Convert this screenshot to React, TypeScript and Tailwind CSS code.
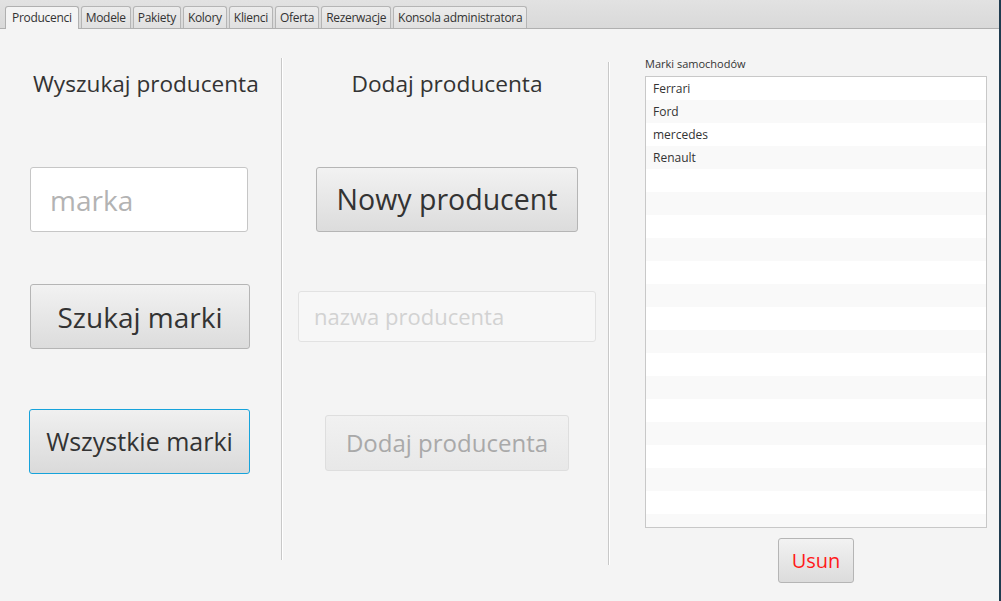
import React from 'react';

const tabs = ['Producenci', 'Modele', 'Pakiety', 'Kolory', 'Klienci', 'Oferta', 'Rezerwacje', 'Konsola administratora'];
const brands = ['Ferrari', 'Ford', 'mercedes', 'Renault'];
const rows = Array.from({ length: 20 }, (_, i) => brands[i] ?? '');

const btn =
  'rounded-[3px] border border-[#b5b5b5] bg-gradient-to-b from-[#f2f2f2] to-[#dcdcdc] text-[#333] flex items-center justify-center';

const App: React.FC = () => {
  return (
    <div
      className="w-[1001px] h-[601px] bg-[#f4f4f4] flex flex-col overflow-hidden relative"
      style={{ fontFamily: '"Open Sans", "Noto Sans", sans-serif' }}
    >
      {/* tab header */}
      <div className="h-[29px] shrink-0 bg-gradient-to-b from-[#e2e2e2] to-[#d9d9d9] border-b border-[#b0b0b0] flex items-end pl-[5px] gap-[2px]">
        {tabs.map((t, i) => (
          <div
            key={t}
            className={
              i === 0
                ? 'h-[23px] -mb-px px-[6px] flex items-center text-[12px] tracking-[-0.3px] text-[#333] bg-[#f4f4f4] border border-b-0 border-[#b0b0b0] rounded-t-[3px]'
                : 'h-[22px] px-[4px] flex items-center text-[12px] tracking-[-0.3px] text-[#333] bg-gradient-to-b from-[#ececec] to-[#e0e0e0] border border-b-0 border-[#b5b5b5] rounded-t-[3px]'
            }
          >
            {t}
          </div>
        ))}
      </div>

      <div className="flex flex-1">
        {/* search column */}
        <div className="w-[281px] shrink-0 flex flex-col">
          <div className="mt-[40px] h-[30px] pl-[33px] text-[22.6px] leading-[30px] text-[#333]">
            Wyszukaj producenta
          </div>
          <div className="mt-[68px] ml-[30px] w-[218px] h-[65px] rounded-[3px] border border-[#c6c6c6] bg-white flex items-center pl-[19px] text-[28px] text-[#b3b3b3]">
            marka
          </div>
          <div className={`${btn} mt-[52px] ml-[30px] w-[220px] h-[65px] text-[28px]`}>Szukaj marki</div>
          <div className="mt-[60px] ml-[29px] w-[221px] h-[65px] rounded-[3px] border border-[#16a3db] bg-gradient-to-b from-[#f0f0f0] to-[#dadada] text-[#333] flex items-center justify-center text-[25px]">
            Wszystkie marki
          </div>
        </div>

        {/* separator */}
        <div className="mt-[29px] h-[502px] w-[2px] shrink-0 border-l border-[#c8c8c8] bg-white" />

        {/* add column */}
        <div className="w-[325px] shrink-0 flex flex-col items-center pl-[3px]">
          <div className="mt-[40px] h-[30px] text-[22.7px] leading-[30px] text-[#333]">
            Dodaj producenta
          </div>
          <div className={`${btn} mt-[68px] w-[262px] h-[65px] text-[28.5px]`}>Nowy producent</div>
          <div className="mt-[59px] w-[298px] h-[51px] rounded-[3px] border border-[#e2e2e2] bg-[#f7f7f7] flex items-center pl-[15px] text-[22px] text-[#d2d2d2]">
            nazwa producenta
          </div>
          <div className="mt-[73px] w-[244px] h-[56px] rounded-[3px] border border-[#dedede] bg-gradient-to-b from-[#f1f1f1] to-[#e8e8e8] text-[#a9a9a9] flex items-center justify-center text-[24px]">
            Dodaj producenta
          </div>
        </div>

        {/* separator */}
        <div className="mt-[33px] h-[503px] w-[2px] shrink-0 border-l border-[#c8c8c8] bg-white" />

        {/* list column */}
        <div className="flex-1 flex flex-col pl-[35px] pr-[14px]">
          <div className="mt-[27px] text-[11px] leading-[16px] text-[#333]">Marki samochodów</div>
          <div className="mt-[4px] h-[452px] border border-[#c8c8c8] bg-white overflow-hidden">
            {rows.map((r, i) => (
              <div
                key={i}
                className={`h-[23px] leading-[23px] pl-[7px] text-[12px] text-[#333] ${i % 2 === 0 ? 'bg-white' : 'bg-[#f9f9f9]'}`}
              >
                {r}
              </div>
            ))}
          </div>
          <div className="mt-[10px] flex justify-center">
            <div className={`${btn} w-[76px] h-[45px] text-[20px] !text-[#ff1a1a]`}>Usun</div>
          </div>
        </div>
      </div>

      {/* window edge */}
      <div className="absolute right-0 top-0 bottom-0 w-[2px] bg-[#1f3b4f]" />
    </div>
  );
};

export default App;
